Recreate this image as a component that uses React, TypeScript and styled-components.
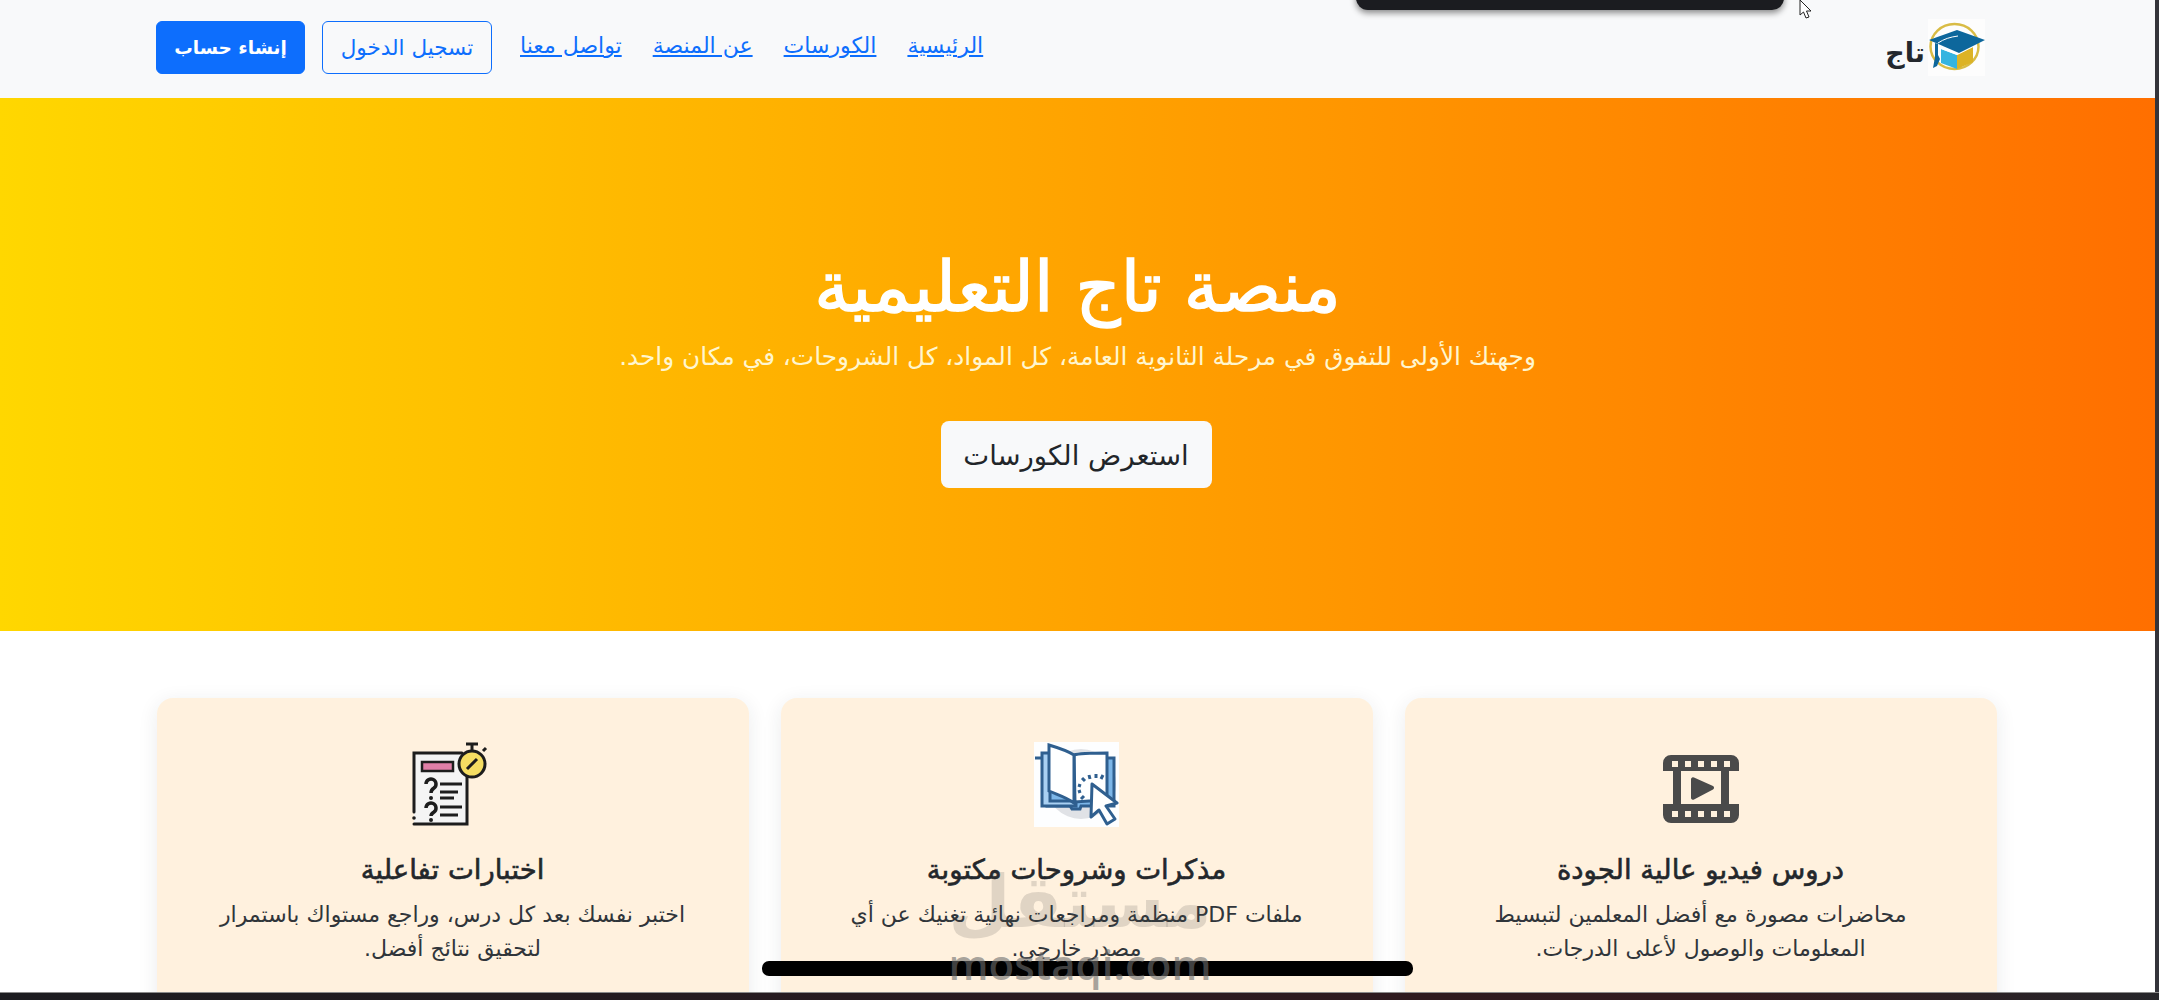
import React from "react";
import styled, { createGlobalStyle } from "styled-components";

const Global = createGlobalStyle`
  html, body { margin: 0; padding: 0; height: 100%; overflow: hidden; background: #1d1a1e; }
  * { box-sizing: border-box; }
  #root { height: 100%; }
`;

const FONT = `"DejaVu Sans", "Noto Sans", sans-serif`;

const Screen = styled.div`
  position: relative;
  height: 1000px;
  width: 2159px;
  display: flex;
  flex-direction: column;
  overflow: hidden;
  background: #1d1a1e;
  font-family: ${FONT};
`;
const Viewport = styled.div`
  height: 992px;
  flex: none;
  display: flex;
  flex-direction: row;
`;
const Page = styled.main`
  direction: rtl;
  flex: 1;
  min-width: 0;
  overflow: hidden;
  background: #fff;
`;
const RightEdge = styled.div`
  width: 4px;
  flex: none;
  background: #34343a;
`;
const TaskStrip = styled.div`
  flex: 1;
  border-top: 1px solid #8a8a8a;
  background: linear-gradient(90deg, #1c1c20 0%, #2a1a20 50%, #331a1e 80%, #26262a 100%);
`;
const Nav = styled.nav`
  height: 98px;
  background: #f8f9fa;
  display: flex;
  align-items: center;
  justify-content: space-between;
  padding: 0 170px 0 156px;
`;
const Brand = styled.div`
  display: flex;
  align-items: center;
  gap: 3px;
  margin-top: -4px;
`;
const BrandText = styled.span`
  font-size: 27px;
  font-weight: 700;
  color: #23282d;
  margin-top: 10px;
`;
const BrandMark = styled.svg`
  width: 57px;
  height: 57px;
  display: block;
`;
const NavGroup = styled.div`
  display: flex;
  align-items: center;
  gap: 28px;
  margin-top: -3px;
`;
const Links = styled.div`
  display: flex;
  align-items: center;
  gap: 31px;
`;
const NavLink = styled.a`
  font-size: 22px;
  color: #0d6efd;
  text-decoration: underline;
  white-space: nowrap;
  margin-top: -5px;
`;
const Actions = styled.div`
  display: flex;
  align-items: center;
  gap: 17px;
`;
const NavButton = styled.button<{ $solid?: boolean }>`
  height: 53px;
  border-radius: 6px;
  font-family: ${FONT};
  font-size: ${(p) => (p.$solid ? "18.5px" : "21.5px")};
  font-weight: ${(p) => (p.$solid ? 700 : 400)};
  white-space: nowrap;
  border: 1px solid #0d6efd;
  color: ${(p) => (p.$solid ? "#fff" : "#0d6efd")};
  background: ${(p) => (p.$solid ? "#0d6efd" : "transparent")};
  width: ${(p) => (p.$solid ? "149px" : "170px")};
  padding: 0;
`;
const Hero = styled.section`
  height: 533px;
  background: linear-gradient(90deg, #ffd700 0%, #ff6f00 100%);
  display: flex;
  flex-direction: column;
  align-items: center;
  color: #fff;
`;
const HeroTitle = styled.h1`
  margin: 145px 0 0;
  font-size: 70px;
  line-height: 88px;
  font-weight: 400;
  -webkit-text-stroke: 1.4px #fff;
`;
const HeroSub = styled.p`
  margin: 7px 0 0;
  font-size: 24.75px;
  line-height: 38px;
  color: #fff6cf;
`;
const HeroButton = styled.button`
  margin: 45px 3px 0 0;
  width: 271px;
  height: 67px;
  border: 0;
  border-radius: 8px;
  background: #f8f9fa;
  color: #212529;
  font-family: ${FONT};
  font-size: 27.500px;
`;
const Cards = styled.section`
  display: grid;
  grid-template-columns: repeat(3, 592px);
  justify-content: center;
  gap: 32px;
  padding: 67px 2px 0 0;
`;
const Card = styled.article`
  height: 342px;
  background: #fff1de;
  border-radius: 16px;
  box-shadow: 0 4px 20px rgba(30, 40, 60, 0.09);
  padding: 44px 56px 0;
  text-align: center;
  color: #212529;
`;
const IconSlot = styled.div`
  height: 85px;
  display: flex;
  justify-content: center;
  align-items: center;
`;
const CardTitle = styled.h3`
  margin: 24px 0 0;
  font-size: 27.500px;
  line-height: 36px;
  font-weight: 400;
  -webkit-text-stroke: 0.6px #23272b;
  color: #23272b;
`;
const CardText = styled.p`
  margin: 11px 0 0;
  font-size: 22px;
  line-height: 34px;
  color: #30353a;
`;
const TopPill = styled.div`
  position: absolute;
  left: 1356px;
  top: -10px;
  width: 428px;
  height: 20px;
  border-radius: 0 0 12px 12px;
  background: #1b1c20;
  box-shadow: 0 3px 6px rgba(0, 0, 0, 0.45);
`;
const Cursor = styled.svg`
  position: absolute;
  left: 1799px;
  top: 0;
  width: 15px;
  height: 20px;
`;
const BottomPill = styled.div`
  position: absolute;
  left: 762px;
  top: 961px;
  width: 651px;
  height: 15px;
  border-radius: 7px;
  background: #000;
`;
const Watermark = styled.div`
  position: absolute;
  left: 950px;
  top: 860px;
  width: 260px;
  display: flex;
  flex-direction: column;
  align-items: center;
  color: rgba(70, 70, 70, 0.17);
  pointer-events: none;
`;
const WatermarkAr = styled.div`
  font-size: 72px;
  line-height: 84px;
  font-weight: 700;
`;
const WatermarkEn = styled.div`
  font-size: 42px;
  line-height: 40px;
  font-weight: 600;
  font-family: "Open Sans", sans-serif;
  color: rgba(110, 110, 110, 0.6);
`;

const LogoMark = () => (
  <BrandMark viewBox="0 0 57 57">
    <rect width="57" height="57" fill="#fdfdfd" />
    <ellipse cx="26.500" cy="27.500" rx="24" ry="22.500" fill="none" stroke="#d9bc45" strokeWidth="2.500" />
    <path d="M13 30 L29 36 L29 50 L13 44 Z" fill="#35b4e0" />
    <path d="M29 36 L45 28 L45 43 L29 50 Z" fill="#dcb325" />
    <path d="M13 30 L29 24 L45 28 L29 36 Z" fill="#fff" />
    <path d="M1 21 L29 11 L57 21 L31 34 Z" fill="#0d679c" />
    <path d="M10 24 C16 20 22 18 30 17" fill="none" stroke="#fff" strokeWidth="1" />
    <path d="M7 24 L10 25 L10 36 L12 40 L9 47 L5 49 L7 38 Z" fill="#0d679c" />
  </BrandMark>
);

const FilmIcon = () => (
  <svg width="76" height="85" viewBox="0 -13 76 85">
    <path
      fillRule="evenodd"
      fill="#4a4a4a"
      d="M8 0H68a8 8 0 0 1 8 8V16H66V49H76V60a8 8 0 0 1-8 8H8a8 8 0 0 1-8-8V49H10V16H0V8a8 8 0 0 1 8-8ZM18 16V49H58V16ZM9 6V12H15V6ZM22 6V12H28V6ZM35 6V12H41V6ZM48 6V12H54V6ZM61 6V12H67V6ZM9 56V62H15V56ZM22 56V62H28V56ZM35 56V62H41V56ZM48 56V62H54V56ZM61 56V62H67V56Z"
    />
    <path d="M28 24 a2 2 0 0 1 3-1.500 L50 31 a2 2 0 0 1 0 3.500 L31 44.500 a2 2 0 0 1-3-1.500Z" fill="#4a4a4a" />
  </svg>
);

const BookIcon = () => (
  <svg width="85" height="85" viewBox="0 0 85 85">
    <rect width="85" height="85" fill="#fdfeff" />
    <circle cx="47" cy="42" r="35" fill="#e0e2e6" />
    <path d="M1 16H13V64H36L38 67H46L47 64H80V16H72" fill="#7cb6e8" stroke="#2f5f8f" strokeWidth="3" />
    <path d="M8 11H16V59H42V64H8Z" fill="#a9d0f2" stroke="#2f5f8f" strokeWidth="3" />
    <path d="M40 13 C46 11 60 11 73 11V59H55L41 60Z" fill="#fff" stroke="#2f5f8f" strokeWidth="3" />
    <path d="M15 3 C25 6 34 9 40 13V61 C32 55 24 53 15 49Z" fill="#fff" stroke="#2f5f8f" strokeWidth="3" />
    <path d="M58 42 L83 61 L72 64 L81 77 L73 82 L65 68 L57 75Z" fill="#fff" stroke="#2f5f8f" strokeWidth="3" strokeLinejoin="round" />
    <path d="M62 36V32M56 37L55 33M51 39L48 36M47 44L44 43M47 49L44 50M50 54L47 57M67 37L69 33" stroke="#2f5f8f" strokeWidth="3" />
  </svg>
);

const QuizIcon = () => (
  <svg width="82" height="85" viewBox="0 0 82 85">
    <path d="M2 11H54V81H2Z" fill="#f4f4f4" />
    <path d="M55 24V82H2M2 70V11H50" fill="none" stroke="#1d1d1d" strokeWidth="3" strokeLinecap="round" />
    <circle cx="2" cy="76" r="1.800" fill="#1d1d1d" />
    <rect x="10" y="20" width="31" height="9" fill="#e07fa7" stroke="#1d1d1d" strokeWidth="2.500" />
    <path d="M14 42 a5 5 0 1 1 8 4 q-3 2-3 5M14 66 a5 5 0 1 1 8 4 q-3 2-3 4" fill="none" stroke="#1d1d1d" strokeWidth="3.500" />
    <circle cx="19" cy="56" r="2" fill="#1d1d1d" />
    <circle cx="19" cy="78" r="2" fill="#1d1d1d" />
    <path d="M28 42H50M28 50H46M28 56H42M28 65H50M28 73H46" stroke="#1d1d1d" strokeWidth="3" />
    <circle cx="60" cy="22" r="13" fill="#f5dd62" stroke="#1d1d1d" strokeWidth="3" />
    <path d="M55 27L65 17M60 9V3M54 2H66M71 9L74 6" stroke="#1d1d1d" strokeWidth="3" />
  </svg>
);

const items = [
  {
    title: "دروس فيديو عالية الجودة",
    text: "محاضرات مصورة مع أفضل المعلمين لتبسيط المعلومات والوصول لأعلى الدرجات.",
    icon: <FilmIcon />,
  },
  {
    title: "مذكرات وشروحات مكتوبة",
    text: "ملفات PDF منظمة ومراجعات نهائية تغنيك عن أي مصدر خارجي.",
    icon: <BookIcon />,
  },
  {
    title: "اختبارات تفاعلية",
    text: "اختبر نفسك بعد كل درس، وراجع مستواك باستمرار لتحقيق نتائج أفضل.",
    icon: <QuizIcon />,
  },
];

export default function App() {
  return (
    <>
      <Global />
      <Screen>
        <Viewport>
          <Page>
            <Nav>
              <Brand>
                <LogoMark />
                <BrandText>تاج</BrandText>
              </Brand>
              <NavGroup>
                <Links>
                  <NavLink>الرئيسية</NavLink>
                  <NavLink>الكورسات</NavLink>
                  <NavLink>عن المنصة</NavLink>
                  <NavLink>تواصل معنا</NavLink>
                </Links>
                <Actions>
                  <NavButton>تسجيل الدخول</NavButton>
                  <NavButton $solid>إنشاء حساب</NavButton>
                </Actions>
              </NavGroup>
            </Nav>
            <Hero>
              <HeroTitle>منصة تاج التعليمية</HeroTitle>
              <HeroSub>وجهتك الأولى للتفوق في مرحلة الثانوية العامة، كل المواد، كل الشروحات، في مكان واحد.</HeroSub>
              <HeroButton>استعرض الكورسات</HeroButton>
            </Hero>
            <Cards>
              {items.map((c) => (
                <Card key={c.title}>
                  <IconSlot>{c.icon}</IconSlot>
                  <CardTitle>{c.title}</CardTitle>
                  <CardText>{c.text}</CardText>
                </Card>
              ))}
            </Cards>
          </Page>
          <RightEdge />
        </Viewport>
        <TaskStrip />
        <TopPill />
        <Cursor viewBox="0 0 15 20">
          <path d="M1 0 V15 L4.500 12 L7 18 L10 17 L7.500 11 L12 11 Z" fill="#fff" stroke="#222" strokeWidth="1" />
        </Cursor>
        <BottomPill />
        <Watermark>
          <WatermarkAr>مستقل</WatermarkAr>
          <WatermarkEn>mostaqi.com</WatermarkEn>
        </Watermark>
      </Screen>
    </>
  );
}
